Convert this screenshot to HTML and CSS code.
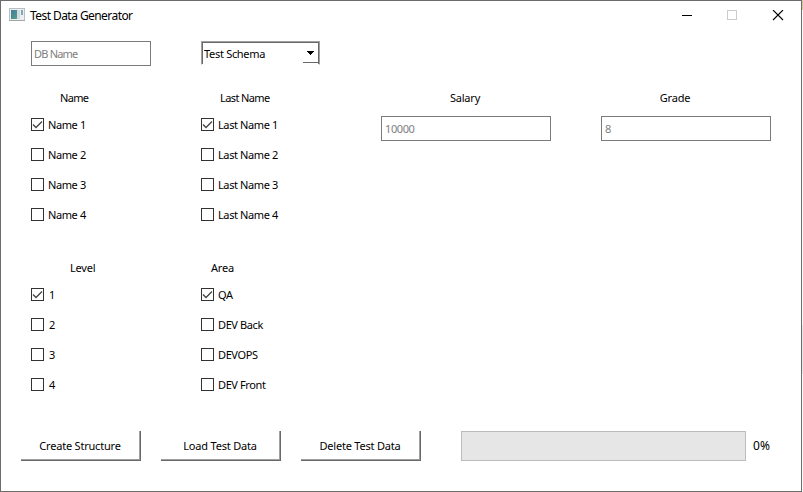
FILE: index.html
```html
<!DOCTYPE html>
<html lang="en">
<head>
<meta charset="utf-8">
<title>Test Data Generator</title>
<link rel="stylesheet" href="styles.css">
</head>
<body>
<div class="window">
  <header class="titlebar">
    <svg class="app-icon" width="16" height="14" viewBox="0 0 16 14">
      <defs><linearGradient id="g" x1="0" y1="0" x2="1" y2="1"><stop offset="0" stop-color="#4577a5"/><stop offset="1" stop-color="#4fa283"/></linearGradient></defs>
      <rect x=".5" y=".5" width="15" height="12" fill="#eceeef" stroke="#b9bec2"/>
      <rect x="2" y="2" width="6" height="9" fill="url(#g)"/>
      <rect x="8" y="2" width="3" height="9" fill="#d3dbe0"/>
      <rect x="12" y="2" width="2" height="5" fill="#7fa9b4"/>
      <rect x="0" y="12" width="16" height="1" fill="#a2a6a8"/>
    </svg>
    <span class="title">Test Data Generator</span>
    <svg class="controls" width="102" height="11" viewBox="0 0 102 11" shape-rendering="crispEdges">
      <path d="M0 5.5h10" stroke="#000"/>
      <rect x="45.5" y=".5" width="9" height="9" fill="none" stroke="#ccc"/>
      <path d="M91 0l10 10M101 0l-10 10" stroke="#000" stroke-width="1.1" shape-rendering="auto"/>
    </svg>
  </header>

  <div class="row top">
    <div class="field db">DB Name</div>
    <div class="select"><span class="value">Test Schema</span><span class="arrow"><svg width="7" height="4" viewBox="0 0 7 4" shape-rendering="crispEdges"><path d="M0 0h7v1h-1v1h-1v1h-1v1h-1v-1h-1v-1h-1v-1h-1z"/></svg></span></div>
  </div>

  <div class="row people">
    <section class="group">
      <h2 class="in30">Name</h2>
      <div class="check on">Name 1</div><div class="check">Name 2</div><div class="check">Name 3</div><div class="check">Name 4</div>
    </section>
    <section class="group last">
      <h2 class="in20">Last Name</h2>
      <div class="check on">Last Name 1</div><div class="check">Last Name 2</div><div class="check">Last Name 3</div><div class="check">Last Name 4</div>
    </section>
    <section class="number"><h2>Salary</h2><div class="field">10000</div></section>
    <section class="number grade"><h2>Grade</h2><div class="field">8</div></section>
  </div>

  <div class="row jobs">
    <section class="group digits">
      <h2 class="in40">Level</h2>
      <div class="check on">1</div><div class="check">2</div><div class="check">3</div><div class="check">4</div>
    </section>
    <section class="group area">
      <h2 class="in10">Area</h2>
      <div class="check on">QA</div><div class="check">DEV Back</div><div class="check">DEVOPS</div><div class="check">DEV Front</div>
    </section>
  </div>

  <footer class="actions">
    <div class="button">Create Structure</div>
    <div class="button">Load Test Data</div>
    <div class="button">Delete Test Data</div>
    <div class="progress"></div>
    <span class="percent">0%</span>
  </footer>
</div>
</body>
</html>
```
FILE: styles.css
```css
*, *::before { box-sizing: border-box; }
body { margin: 0; width: 803px; height: 492px; overflow: hidden; background: linear-gradient(#d9c9a0 10px, #fafafa 10px, #fafafa 325px, #e8e8e8 325px, #e8e8e8 374px, #fafafa 374px); font: 11px/16px "Noto Sans", sans-serif; color: #000; letter-spacing: -0.2px; }
.window { width: 802px; height: 492px; border: 1px solid #6e6b68; background: #fff; }
.titlebar { display: flex; align-items: center; height: 29px; padding: 0 17px 0 8px; }
.app-icon { margin-bottom: 2px; }
.title { margin-left: 5px; flex: 1; font-size: 12px; letter-spacing: -0.56px; }
.row { display: flex; padding-left: 30px; }
.row > * { flex-shrink: 0; }
.top { margin-top: 11px; gap: 50px; }
.field { height: 25px; border: 1px solid #7a7a7a; padding: 4px 3px; line-height: 16px; color: #808080; letter-spacing: -0.4px; }
.db { width: 120px; padding-left: 2px; letter-spacing: -0.8px; }
.select { display: flex; width: 119px; height: 24px; border: 1px solid #a0a0a0; border-bottom-color: #fff; box-shadow: inset 1px 1px #696969, inset -1px 0 #696969; padding: 0 1px 0 2px; line-height: 24px; letter-spacing: -0.3px; }
.value { flex: 1; }
.arrow { display: flex; align-items: center; justify-content: center; width: 15px; height: 20px; margin-top: 1px; border-bottom: 1px solid #696969; }
.people { margin-top: 24px; height: 170px; }
.jobs { height: 171px; }
.group { width: 170px; }
.last { width: 180px; }
h2 { margin: 0; font-size: 11px; font-weight: 400; line-height: 16px; height: 16px; }
.in10 { padding-left: 10px; }
.in20 { padding-left: 19px; letter-spacing: -0.6px; }
.in30 { padding-left: 29px; letter-spacing: -0.7px; }
.in40 { padding-left: 39px; }
.check { display: flex; align-items: center; gap: 4px; height: 30px; letter-spacing: -0.4px; }
.digits .check { gap: 5px; }
.group h2 + .check { margin-top: 4px; }
.check::before { content: ""; width: 13px; height: 13px; margin-bottom: 2px; border: 1px solid #333; }
.check.on::before { background: url("data:image/svg+xml,%3Csvg xmlns='http://www.w3.org/2000/svg' width='11' height='11'%3E%3Cpath d='M1 5.5L4 8.5L10 2.5' fill='none' stroke='%23444' stroke-width='1.3'/%3E%3C/svg%3E") no-repeat; }
.number { width: 170px; margin-right: 50px; }
.number h2 { width: 168px; text-align: center; }
.grade h2 { width: 148px; }
.number .field { margin-top: 10px; }
.actions { display: flex; padding-left: 20px; gap: 20px; line-height: 30px; }
.button { width: 120px; height: 30px; text-align: center; padding-right: 2px; box-shadow: inset -1px -1px #696969, inset -2px -2px #a0a0a0; }
.progress { width: 285px; height: 30px; margin-left: 20px; background: #e6e6e6; border: 1px solid #bcbcbc; }
.percent { margin-left: -13px; font-size: 12px; letter-spacing: 0.2px; }
```
